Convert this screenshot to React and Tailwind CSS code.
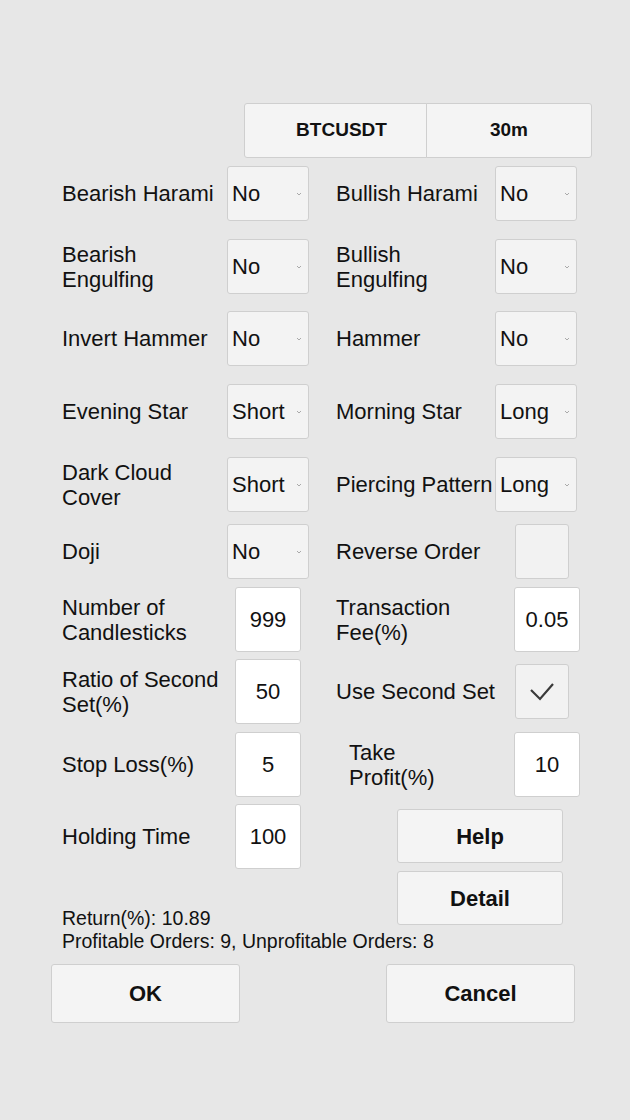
import React, { useState } from "react";

const font = { fontFamily: "'Liberation Sans', Arial, sans-serif" };

function Chevron() {
  return (
    <svg width="6" height="4" viewBox="0 0 6 4" className="shrink-0">
      <path d="M1 1 L3 3 L5 1" fill="none" stroke="#a0a0a0" strokeWidth="0.9" />
    </svg>
  );
}

function Select({ value }) {
  return (
    <div className="flex h-[55px] w-[82px] shrink-0 items-center justify-between rounded-[3px] border border-[#cfcfcf] bg-[#f3f3f3] pl-[4px] pr-[6px] text-[22px] text-[#111]">
      <span>{value}</span>
      <Chevron />
    </div>
  );
}

function Field({ value }) {
  return (
    <div className="flex h-[65px] w-[66px] shrink-0 items-center justify-center rounded-[3px] border border-[#cfcfcf] bg-white text-[22px] text-[#111]">
      {value}
    </div>
  );
}

function Check({ checked }) {
  return (
    <div className="flex h-[55px] w-[54px] shrink-0 items-center justify-center rounded-[3px] border border-[#cfcfcf] bg-[#f2f2f2]">
      {checked && (
        <svg width="26" height="20" viewBox="0 0 26 20">
          <path d="M2 8 L11 17 L24 2" fill="none" stroke="#3a3a3a" strokeWidth="2.2" />
        </svg>
      )}
    </div>
  );
}

function Label({ className = "", children }) {
  return (
    <div className={"shrink-0 text-[22px] leading-[25px] text-[#111] " + className}>
      {children}
    </div>
  );
}

// rows with dropdowns: label 62->227, select 227->309, label 336->495, select 495->577
function SelectRow({ mt, left, leftVal, right, rightVal }) {
  return (
    <div className={"flex h-[55px] items-center " + mt}>
      <Label className="w-[165px]">{left}</Label>
      <Select value={leftVal} />
      <Label className="ml-[27px] w-[159px]">{right}</Label>
      {rightVal}
    </div>
  );
}

function BigButton({ className = "", children }) {
  return (
    <button className={"flex shrink-0 items-center justify-center rounded-[3px] border border-[#cfcfcf] bg-[#f4f4f4] font-bold text-[#111] " + className}>
      {children}
    </button>
  );
}

export default function App() {
  const [useSecond] = useState(true);

  return (
    <div className="min-h-[1120px] w-full bg-[#e7e7e7] pt-[103px]" style={font}>
      <div className="flex pl-[244px]">
        <BigButton className="h-[55px] w-[183px] rounded-r-none pl-[12px] text-[19px]">BTCUSDT</BigButton>
        <BigButton className="h-[55px] w-[166px] -ml-px rounded-l-none text-[19px]">30m</BigButton>
      </div>

      <div className="pl-[62px]">
        <SelectRow mt="mt-[8px]" left="Bearish Harami" leftVal="No" right="Bullish Harami" rightVal={<Select value="No" />} />
        <SelectRow
          mt="mt-[18px]"
          left={<>Bearish<br />Engulfing</>}
          leftVal="No"
          right={<>Bullish<br />Engulfing</>}
          rightVal={<Select value="No" />}
        />
        <SelectRow mt="mt-[17px]" left="Invert Hammer" leftVal="No" right="Hammer" rightVal={<Select value="No" />} />
        <SelectRow mt="mt-[18px]" left="Evening Star" leftVal="Short" right="Morning Star" rightVal={<Select value="Long" />} />
        <SelectRow
          mt="mt-[18px]"
          left={<>Dark Cloud<br />Cover</>}
          leftVal="Short"
          right={<span className="whitespace-nowrap">Piercing Pattern</span>}
          rightVal={<Select value="Long" />}
        />
        <div className="mt-[12px] flex h-[55px] items-center">
          <Label className="w-[165px]">Doji</Label>
          <Select value="No" />
          <Label className="ml-[27px] w-[179px]">Reverse Order</Label>
          <Check checked={false} />
        </div>

        {/* numeric rows: label 62->235, input 235->301, label 336->514, input 514->580 */}
        <div className="mt-[8px] flex h-[65px] items-center">
          <Label className="w-[173px]">Number of<br />Candlesticks</Label>
          <Field value="999" />
          <Label className="ml-[35px] w-[178px]">Transaction<br />Fee(%)</Label>
          <Field value="0.05" />
        </div>
        <div className="mt-[7px] flex h-[65px] items-center">
          <Label className="w-[173px]">Ratio of Second<br />Set(%)</Label>
          <Field value="50" />
          <Label className="ml-[35px] w-[179px]">Use Second Set</Label>
          <Check checked={useSecond} />
        </div>
        <div className="mt-[8px] flex h-[65px] items-center">
          <Label className="w-[173px]">Stop Loss(%)</Label>
          <Field value="5" />
          <Label className="ml-[48px] w-[165px]">Take<br />Profit(%)</Label>
          <Field value="10" />
        </div>

        <div className="mt-[7px] flex">
          <div className="flex w-[335px] shrink-0 flex-col">
            <div className="flex h-[65px] items-center">
              <Label className="w-[173px]">Holding Time</Label>
              <Field value="100" />
            </div>
            <div className="mt-[38px] text-[19.5px] leading-[23px] text-[#111]">
              <div>Return(%): 10.89</div>
              <div className="whitespace-nowrap">Profitable Orders: 9, Unprofitable Orders: 8</div>
            </div>
          </div>
          <div className="flex flex-col pt-[5px]">
            <BigButton className="h-[54px] w-[166px] text-[22px]">Help</BigButton>
            <BigButton className="mt-[8px] h-[54px] w-[166px] text-[22px]">Detail</BigButton>
          </div>
        </div>
      </div>

      <div className="mt-[11px] flex pl-[51px]">
        <BigButton className="h-[59px] w-[189px] text-[22px]">OK</BigButton>
        <BigButton className="ml-[146px] h-[59px] w-[189px] text-[22px]">Cancel</BigButton>
      </div>
    </div>
  );
}
